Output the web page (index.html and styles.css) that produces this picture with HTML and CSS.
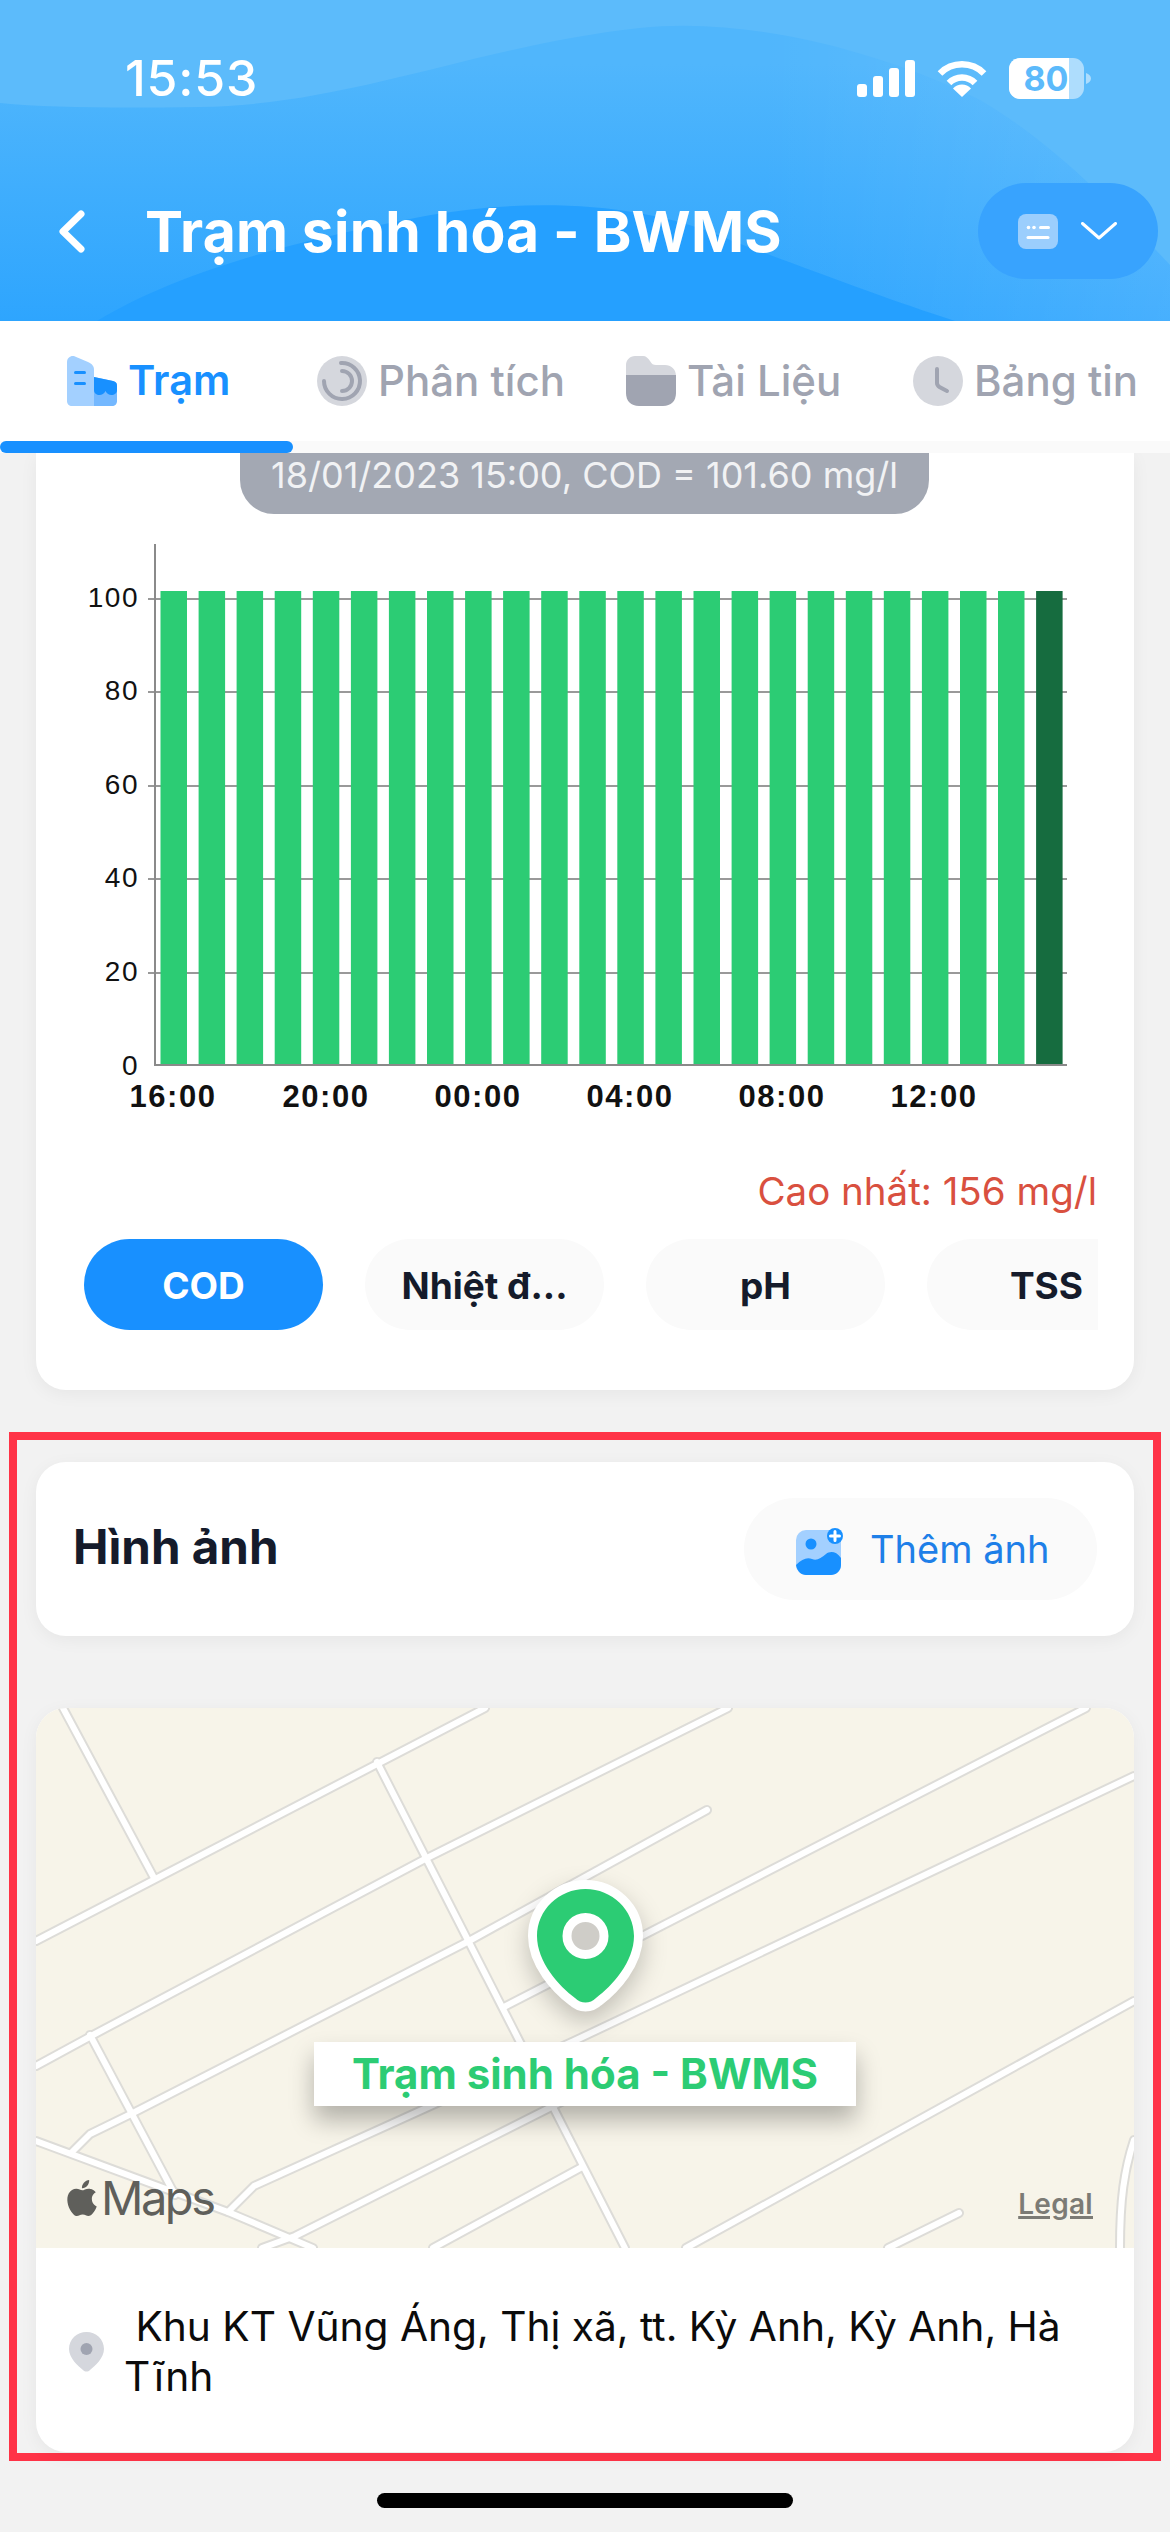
FILE: index.html
```html
<!DOCTYPE html>
<html lang="vi">
<head>
<meta charset="utf-8">
<title>Trạm sinh hóa - BWMS</title>
<link rel="stylesheet" href="styles.css">
</head>
<body>
<div class="page">
  <header class="header">
    <svg class="header-bg" viewBox="0 0 1170 321" preserveAspectRatio="none" aria-hidden="true">
      <path class="wave-light" d="M0 0H1170V265C1100 190 1040 135 980 100C900 60 760 15 640 28C480 45 350 105 200 107C120 108 50 108 0 103Z"/>
      <path class="wave-dark" d="M97 321C180 270 300 240 420 217C520 198 640 200 730 240C810 270 890 300 955 321Z"/>
    </svg>
    <div class="status">
      <span class="time">15:53</span>
      <div class="status-icons">
        <svg class="ic-signal" viewBox="0 0 58 37" aria-hidden="true">
          <rect x="0" y="24" width="10" height="13" rx="3"/>
          <rect x="16" y="16" width="10" height="21" rx="3"/>
          <rect x="32" y="8" width="10" height="29" rx="3"/>
          <rect x="48" y="0" width="10" height="37" rx="3"/>
        </svg>
        <svg class="ic-wifi" viewBox="0 0 50 37" aria-hidden="true">
          <path class="wifi-arc" d="M3 13.5A31 31 0 0 1 47 13.5"/>
          <path class="wifi-arc" d="M12 23A18 18 0 0 1 38 23"/>
          <path class="wifi-dot" d="M25 37L16 28.500A12 12 0 0 1 34 28.500Z"/>
        </svg>
        <svg class="ic-battery" viewBox="0 0 82 41" aria-hidden="true">
          <rect class="bat-rest" x="0" y="0" width="75" height="41" rx="11"/>
          <path class="bat-fill" d="M11 0H60V41H11A11 11 0 0 1 0 30V11A11 11 0 0 1 11 0Z"/>
          <path class="bat-rest" d="M77 15C80 16 82 18 82 20.500C82 23 80 25 77 26Z"/>
          <text class="bat-text" x="37" y="33">80</text>
        </svg>
      </div>
    </div>
    <div class="nav">
      <svg class="ic-back" viewBox="0 0 28 43" aria-hidden="true"><path d="M23 4L5 21.500L23 39"/></svg>
      <h1 class="title">Trạm sinh hóa - BWMS</h1>
      <div class="nav-pill">
        <svg class="ic-station" viewBox="0 0 40 35" aria-hidden="true">
          <rect class="st-bg" width="40" height="35" rx="8"/>
          <circle class="st-mark" cx="10.500" cy="13.500" r="1.800"/>
          <circle class="st-mark" cx="16" cy="13.500" r="1.800"/>
          <rect class="st-mark" x="21" y="12" width="11" height="3" rx="1.500"/>
          <rect class="st-mark" x="8.500" y="22" width="23" height="3" rx="1.500"/>
        </svg>
        <svg class="ic-down" viewBox="0 0 36 18" aria-hidden="true"><path d="M1.500 1.500L18 16L34.500 1.500"/></svg>
      </div>
    </div>
  </header>

  <nav class="tabs">
    <div class="tab-row">
      <div class="tab tab-active">
        <svg class="tab-ic" viewBox="0 0 50 50" aria-hidden="true">
          <path class="c-blue-1" d="M27 50H5C2 50 0 48 0 45V6C0 2 4-1 8 .5L21 6C25 8 27 10 27 14Z"/>
          <path class="c-blue-2" d="M27 21L46 25C49 26 50 27 50 30V45C50 48 48 50 45 50H27Z"/>
          <path class="c-blue-3" d="M27 21L46 25C49 26 50 27 50 30V34C50 40 41 41 38.500 35C36 41 27 40 27 34Z"/>
          <rect class="c-blue-3" x="7" y="15" width="12" height="3" rx="1.500"/>
          <rect class="c-blue-3" x="7" y="26" width="12" height="3" rx="1.500"/>
        </svg>
        <span>Trạm</span>
      </div>
      <div class="tab">
        <svg class="tab-ic" viewBox="0 0 50 50" aria-hidden="true">
          <circle class="c-gray-1" cx="25" cy="25" r="25"/>
          <path class="arc" d="M24 7A18 18 0 1 1 7 25"/>
          <path class="arc" d="M25 15A10 10 0 0 1 25 35"/>
        </svg>
        <span>Phân tích</span>
      </div>
      <div class="tab">
        <svg class="tab-ic" viewBox="0 0 50 50" aria-hidden="true">
          <path class="c-gray-1" d="M0 20V9C0 4 4 0 9 0H17C20 0 22 2 24 5C26 8 27 9 30 9H39C45 9 50 13 50 20Z"/>
          <path class="c-gray-2" d="M0 19H50V37C50 45 45 50 37 50H13C5 50 0 45 0 37Z"/>
        </svg>
        <span>Tài Liệu</span>
      </div>
      <div class="tab">
        <svg class="tab-ic" viewBox="0 0 50 50" aria-hidden="true">
          <circle class="c-gray-1" cx="25" cy="25" r="25"/>
          <path class="arc" d="M24 13V27C24 29 25 30 26.500 31L34 35"/>
        </svg>
        <span>Bảng tin</span>
      </div>
    </div>
    <div class="tab-track"><div class="tab-indicator"></div></div>
  </nav>

  <main class="content">
    <section class="card chart-card">
      <div class="tooltip">18/01/2023 15:00, COD = 101.60 mg/l</div>
      <svg class="chart" viewBox="36 514 1098 652" aria-label="COD">
        <g class="grid">
          <path d="M148 599H1067"/><path d="M148 692H1067"/><path d="M148 786H1067"/>
          <path d="M148 879H1067"/><path d="M148 973H1067"/>
        </g>
        <g class="bars">
          <rect x="160.500" y="591" width="26.500" height="474"/><rect x="198.600" y="591" width="26.500" height="474"/>
          <rect x="236.600" y="591" width="26.500" height="474"/><rect x="274.700" y="591" width="26.500" height="474"/>
          <rect x="312.800" y="591" width="26.500" height="474"/><rect x="350.900" y="591" width="26.500" height="474"/>
          <rect x="388.900" y="591" width="26.500" height="474"/><rect x="427" y="591" width="26.500" height="474"/>
          <rect x="465.100" y="591" width="26.500" height="474"/><rect x="503.100" y="591" width="26.500" height="474"/>
          <rect x="541.200" y="591" width="26.500" height="474"/><rect x="579.300" y="591" width="26.500" height="474"/>
          <rect x="617.300" y="591" width="26.500" height="474"/><rect x="655.400" y="591" width="26.500" height="474"/>
          <rect x="693.500" y="591" width="26.500" height="474"/><rect x="731.600" y="591" width="26.500" height="474"/>
          <rect x="769.600" y="591" width="26.500" height="474"/><rect x="807.700" y="591" width="26.500" height="474"/>
          <rect x="845.800" y="591" width="26.500" height="474"/><rect x="883.800" y="591" width="26.500" height="474"/>
          <rect x="921.900" y="591" width="26.500" height="474"/><rect x="960" y="591" width="26.500" height="474"/>
          <rect x="998" y="591" width="26.500" height="474"/>
          <rect class="bar-now" x="1036.100" y="591" width="26.500" height="474"/>
        </g>
        <path class="axis" d="M155 544V1065H1067"/>
        <g class="y-labels">
          <text x="139" y="607">100</text><text x="139" y="700">80</text><text x="139" y="794">60</text>
          <text x="139" y="887">40</text><text x="139" y="981">20</text><text x="139" y="1075">0</text>
        </g>
        <g class="x-labels">
          <text x="173" y="1107">16:00</text><text x="326" y="1107">20:00</text><text x="478" y="1107">00:00</text>
          <text x="630" y="1107">04:00</text><text x="782" y="1107">08:00</text><text x="934" y="1107">12:00</text>
        </g>
      </svg>
      <p class="peak">Cao nhất: 156 mg/l</p>
      <div class="chips">
        <span class="chip chip-on">COD</span>
        <span class="chip">Nhiệt đ...</span>
        <span class="chip">pH</span>
        <span class="chip">TSS</span>
      </div>
    </section>

    <section class="highlight">
      <div class="card photo-card">
        <h2 class="photo-title">Hình ảnh</h2>
        <div class="add-btn">
          <svg class="ic-add" viewBox="0 0 54 54" aria-hidden="true">
            <rect class="c-blue-1" x="0" y="8" width="45" height="45" rx="10"/>
            <circle class="c-blue-3" cx="15" cy="22" r="5.500"/>
            <path class="c-blue-3" d="M0 43C6 37 11 35 16 37C21 39 25 36 30 32C34 29 40 29 45 36V43C45 49 40 53 35 53H10C5 53 1 49 0 43Z"/>
            <circle class="c-blue-3" cx="39" cy="14" r="8"/>
            <path class="plus" d="M39 9.500V18.500M34.500 14H43.500"/>
          </svg>
          <span>Thêm ảnh</span>
        </div>
      </div>

      <div class="card map-card">
        <div class="map">
          <svg class="map-roads" viewBox="36 1708 1098 540" aria-hidden="true">
            <g class="road-case">
              <path d="M63 1708L153 1876"/><path d="M485 1708L36 1941"/>
              <path d="M728 1708L425 1859L93 2035L36 2066"/>
              <path d="M377 1762L625 2248"/>
              <path d="M707 1810L469 1941L131 2114L90 2134L71 2153"/>
              <path d="M1086 1708L504 2007"/>
              <path d="M1134 1776L574 2041L254 2186L228 2212"/>
              <path d="M597 2084L295 2236L262 2248"/>
              <path d="M1134 2001L686 2248"/>
              <path d="M582 2167L433 2248"/>
              <path d="M959 2213L888 2248"/>
              <path d="M36 2141L228 2212L313 2248"/>
              <path d="M90 2035L175 2195"/>
              <path d="M1134 2140C1124 2170 1120 2200 1120 2248"/>
            </g>
            <g class="road-core">
              <path d="M63 1708L153 1876"/><path d="M485 1708L36 1941"/>
              <path d="M728 1708L425 1859L93 2035L36 2066"/>
              <path d="M377 1762L625 2248"/>
              <path d="M707 1810L469 1941L131 2114L90 2134L71 2153"/>
              <path d="M1086 1708L504 2007"/>
              <path d="M1134 1776L574 2041L254 2186L228 2212"/>
              <path d="M597 2084L295 2236L262 2248"/>
              <path d="M1134 2001L686 2248"/>
              <path d="M582 2167L433 2248"/>
              <path d="M959 2213L888 2248"/>
              <path d="M36 2141L228 2212L313 2248"/>
              <path d="M90 2035L175 2195"/>
              <path d="M1134 2140C1124 2170 1120 2200 1120 2248"/>
            </g>
          </svg>
          <svg class="map-pin" viewBox="0 0 115 132" aria-hidden="true">
            <path class="pin-body" d="M57.500 9C84 9 106 30 106 56C106 82 84 106 68 118C62 124 53 124 47 118C31 106 9 82 9 56C9 30 31 9 57.500 9Z"/>
            <circle class="pin-hole" cx="57.500" cy="56" r="18.500"/>
          </svg>
          <div class="map-label">Trạm sinh hóa - BWMS</div>
          <div class="map-logo">
            <svg class="ic-apple" viewBox="0 0 24 24" aria-hidden="true"><path d="M12.152 6.896c-.948 0-2.415-1.078-3.96-1.04-2.04.027-3.91 1.183-4.961 3.014-2.117 3.675-.546 9.103 1.519 12.09 1.013 1.454 2.208 3.09 3.792 3.039 1.52-.065 2.09-.987 3.935-.987 1.831 0 2.35.987 3.96.948 1.637-.026 2.676-1.48 3.676-2.948 1.156-1.688 1.636-3.325 1.662-3.415-.039-.013-3.182-1.221-3.22-4.857-.026-3.04 2.48-4.494 2.597-4.559-1.429-2.09-3.623-2.324-4.39-2.376-2-.156-3.675 1.09-4.61 1.09zM15.53 3.83c.843-1.012 1.4-2.427 1.245-3.83-1.207.052-2.662.805-3.532 1.818-.78.896-1.454 2.338-1.273 3.714 1.338.104 2.715-.688 3.559-1.701"/></svg>
            <span>Maps</span>
          </div>
          <span class="map-legal">Legal</span>
        </div>
        <div class="address">
          <svg class="ic-pin-small" viewBox="0 0 35 40" aria-hidden="true">
            <path class="c-gray-1" d="M17.500 0C27 0 35 7 35 17C35 26 26 34 21 38C19 40 16 40 14 38C9 34 0 26 0 17C0 7 8 0 17.500 0Z"/>
            <ellipse class="c-gray-2" cx="17.500" cy="17" rx="6" ry="6"/>
          </svg>
          <p class="address-text"> Khu KT Vũng Áng, Thị xã, tt. Kỳ Anh, Kỳ Anh, Hà Tĩnh</p>
        </div>
      </div>
    </section>
  </main>

  <div class="home-bar"></div>
</div>
</body>
</html>
```
FILE: styles.css
```css
* { box-sizing: border-box; }
html, body { margin: 0; padding: 0; }
body { background: #f2f2f2; font-family: Inter, "Noto Sans", sans-serif; }
h1, h2, p { margin: 0; }

.page { position: relative; width: 1170px; height: 2532px; overflow: hidden; background: #f2f2f2; }

/* Header */
.header { position: relative; height: 321px; background: linear-gradient(90deg, rgba(255, 255, 255, 0) 65%, rgba(255, 255, 255, .12) 100%), linear-gradient(180deg, #50b6fc 20%, #2ea5fe 100%); color: #fff; }
.header-bg { position: absolute; inset: 0; width: 100%; height: 100%; }
.wave-light { fill: #5cbbfb; }
.wave-dark { fill: #25a0ff; }
.status { position: relative; height: 156px; padding: 0 79px 0 125px; display: flex; align-items: center; justify-content: space-between; }
.time { font-size: 50px; font-weight: 500; line-height: 1; letter-spacing: .8px; }
.status-icons { display: flex; align-items: center; gap: 22px; }
.ic-signal { width: 58px; height: 37px; fill: #fff; }
.ic-wifi { width: 50px; height: 37px; }
.wifi-arc { fill: none; stroke: #fff; stroke-width: 6.500; stroke-linecap: butt; }
.wifi-dot { fill: #fff; }
.ic-battery { width: 82px; height: 41px; }
.bat-rest { fill: rgba(255, 255, 255, .5); }
.bat-fill { fill: #fff; }
.bat-text { fill: #5cbafb; font-size: 34px; font-weight: 700; text-anchor: middle; font-family: Inter, sans-serif; }

.nav { position: relative; margin-top: 27px; height: 96px; padding: 0 12px 0 58px; display: flex; align-items: center; }
.ic-back { width: 28px; height: 43px; fill: none; stroke: #fff; stroke-width: 7; stroke-linecap: round; stroke-linejoin: round; }
.title { margin-left: 59px; font-size: 57px; font-weight: 700; line-height: 1; letter-spacing: .2px; flex: 1; white-space: nowrap; }
.nav-pill { width: 180px; height: 96px; border-radius: 48px; background: #38a3fe; display: flex; align-items: center; padding-left: 40px; gap: 23px; }
.ic-station { width: 40px; height: 35px; }
.st-bg { fill: #9bcefd; }
.st-mark { fill: #fff; }
.ic-down { width: 36px; height: 18px; fill: none; stroke: #fff; stroke-width: 3; stroke-linecap: round; stroke-linejoin: round; }

/* Tabs */
.tabs { position: relative; height: 132px; background: #fff; }
.tab-row { height: 120px; padding: 35px 0 0 67px; display: grid; grid-template-columns: 250px 309px 287px auto; align-items: start; }
.tab { display: flex; align-items: center; height: 50px; gap: 11px; font-size: 42px; font-weight: 500; color: #a0a4b1; white-space: nowrap; line-height: 1; }
.tab-active { color: #1890ff; font-size: 41.500px; font-weight: 600; }
.tab-ic { width: 50px; height: 50px; flex: none; }
.tab-track { height: 12px; background: #fafafa; }
.tab-indicator { width: 293px; height: 12px; border-radius: 6px; background: #1890ff; }
.c-blue-1 { fill: #a3d0ff; }
.c-blue-2 { fill: #74b8ff; }
.c-blue-3 { fill: #1890ff; }
.c-gray-1 { fill: #d5d7dd; }
.c-gray-2 { fill: #a0a4b1; }
.arc { fill: none; stroke: #a0a4b1; stroke-width: 4; stroke-linecap: round; }
.plus { fill: none; stroke: #fff; stroke-width: 3; stroke-linecap: round; }

/* Content */
.content { padding: 0 36px; }
.card { background: #fff; border-radius: 30px; box-shadow: 0 4px 18px rgba(0, 0, 0, .05); }
.chart-card { height: 937px; border-radius: 0 0 30px 30px; }
.tooltip { margin-left: 204px; width: 689px; height: 61px; border-radius: 0 0 34px 34px; background: #a3a8b3; color: #f1f2f4; font-size: 36px; line-height: 44px; text-align: center; white-space: nowrap; }
.chart { display: block; width: 1098px; height: 652px; }
.grid path { stroke: #999; stroke-width: 2; fill: none; }
.bars rect { fill: #2ccc74; }
.bars .bar-now { fill: #166c3f; }
.axis { stroke: #8a8a8a; stroke-width: 2; fill: none; }
.y-labels text { font-family: "Liberation Sans", Arial, sans-serif; font-size: 28px; letter-spacing: 1.500px; fill: #111; text-anchor: end; }
.x-labels text { font-family: "Liberation Sans", Arial, sans-serif; font-size: 31px; font-weight: 700; letter-spacing: 1.500px; fill: #111; text-anchor: middle; }
.peak { height: 50px; padding-right: 37px; text-align: right; font-size: 38.500px; line-height: 50px; color: #d9503f; white-space: nowrap; }
.chips { margin: 23px 0 0 48px; width: 1014px; height: 91px; display: flex; gap: 42px; overflow: hidden; }
.chip { flex: none; width: 239px; height: 91px; border-radius: 46px; background: #fafafa; color: #151b2b; font-size: 37px; font-weight: 700; line-height: 93px; text-align: center; }
.chip-on { background: #1890ff; color: #fff; }

/* Highlight frame */
.highlight { margin: 42px -27px 0; height: 1029px; border: 8px solid #ff3347; padding: 22px 19px 0; }
.photo-card { height: 174px; padding: 0 37px 0 37px; display: flex; align-items: center; justify-content: space-between; }
.photo-title { margin-bottom: 4px; font-size: 47.500px; font-weight: 700; color: #151b2b; line-height: 1; }
.add-btn { width: 353px; height: 102px; border-radius: 51px; background: #fafafa; display: flex; align-items: center; padding-left: 52px; gap: 20px; color: #1e7fe8; font-size: 38px; line-height: 1; white-space: nowrap; }
.ic-add { width: 54px; height: 54px; flex: none; }

.map-card { margin-top: 72px; height: 744px; overflow: hidden; }
.map { position: relative; height: 540px; background: #f7f4e9; }
.map-roads { display: block; width: 100%; height: 100%; }
.road-case path { fill: none; stroke: #dddcd8; stroke-width: 10; stroke-linecap: round; stroke-linejoin: round; }
.road-core path { fill: none; stroke: #fff; stroke-width: 6; stroke-linecap: round; stroke-linejoin: round; }
.map-pin { position: absolute; left: 492px; top: 172px; width: 115px; height: 132px; filter: drop-shadow(0 10px 12px rgba(0, 0, 0, .22)); }
.pin-body { fill: #2ccc74; stroke: #fff; stroke-width: 18; stroke-linejoin: round; paint-order: stroke; }
.pin-hole { fill: #cfcdc8; stroke: #fff; stroke-width: 9; }
.map-label { position: absolute; left: 278px; top: 334px; width: 542px; height: 64px; background: #fff; box-shadow: 0 14px 24px rgba(0, 0, 0, .28); color: #2ccc74; font-size: 42px; font-weight: 700; line-height: 64px; text-align: center; white-space: nowrap; }
.map-logo { position: absolute; left: 28px; top: 470px; display: flex; align-items: center; gap: 1px; color: #5f5f5b; font-size: 47px; font-weight: 400; line-height: 40px; letter-spacing: -2.500px; }
.ic-apple { width: 36px; height: 38px; fill: #5f5f5b; }
.map-legal { position: absolute; right: 41px; top: 480px; color: #7c7b75; font-size: 28px; font-weight: 600; line-height: 32px; letter-spacing: .3px; text-decoration: underline; text-decoration-thickness: 3px; }

.address { height: 204px; padding: 4px 70px 0 33px; display: flex; align-items: center; gap: 20px; }
.ic-pin-small { width: 35px; height: 40px; flex: none; }
.address-text { font-size: 40.700px; line-height: 50px; color: #0b0b0b; white-space: pre-wrap; }

.home-bar { position: absolute; left: 377px; top: 2493px; width: 416px; height: 15px; border-radius: 8px; background: #000; }
```
